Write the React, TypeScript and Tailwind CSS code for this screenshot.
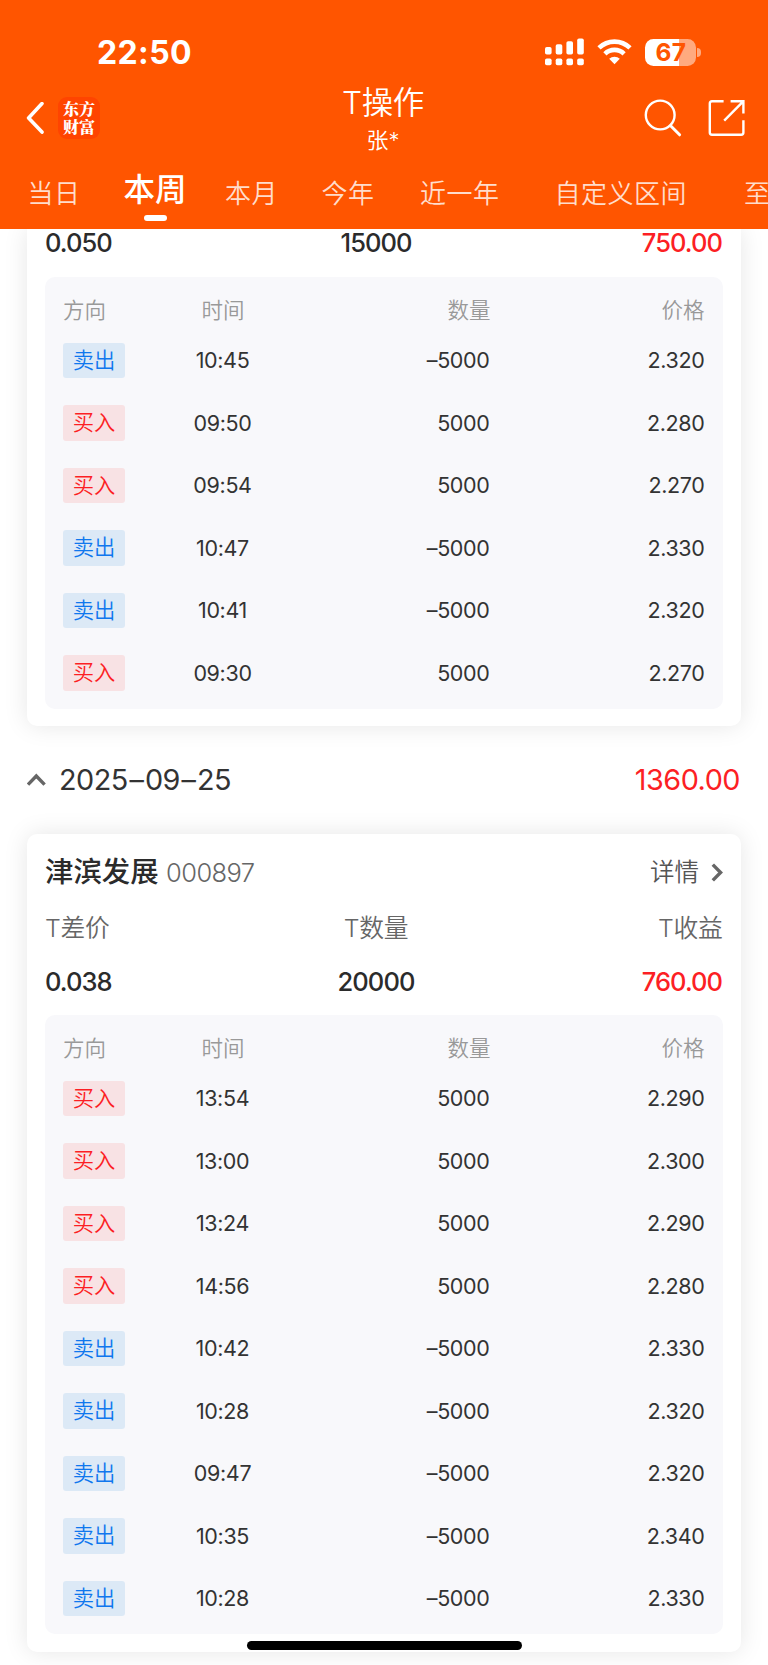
import React from "react";

type Side = "buy" | "sell";
type Trade = { side: Side; time: string; price: string };

const firstTrades: Trade[] = [
  { side: "sell", time: "10:45", price: "2.320" },
  { side: "buy", time: "09:50", price: "2.280" },
  { side: "buy", time: "09:54", price: "2.270" },
  { side: "sell", time: "10:47", price: "2.330" },
  { side: "sell", time: "10:41", price: "2.320" },
  { side: "buy", time: "09:30", price: "2.270" },
];

const secondTrades: Trade[] = [
  { side: "buy", time: "13:54", price: "2.290" },
  { side: "buy", time: "13:00", price: "2.300" },
  { side: "buy", time: "13:24", price: "2.290" },
  { side: "buy", time: "14:56", price: "2.280" },
  { side: "sell", time: "10:42", price: "2.330" },
  { side: "sell", time: "10:28", price: "2.320" },
  { side: "sell", time: "09:47", price: "2.320" },
  { side: "sell", time: "10:35", price: "2.340" },
  { side: "sell", time: "10:28", price: "2.330" },
];

const tabs = [
  { label: "当日", margin: "ml-[27.5px]" },
  { label: "本周", margin: "ml-[43px]", active: true },
  { label: "本月", margin: "ml-[38.5px]" },
  { label: "今年", margin: "ml-[43.5px]" },
  { label: "近一年", margin: "ml-[45.5px]" },
  { label: "自定义区间", margin: "ml-[55px]" },
  { label: "至今", margin: "ml-[57px]" },
];

function StatusBar() {
  return (
    <div className="flex h-[52px] items-center pl-[97px] pr-[67px]">
      <span className="mt-[2px] text-[32px] font-bold leading-[52px] tracking-[0.4px]">22:50</span>
      <svg className="ml-auto" width="39" height="28" viewBox="0 0 39 28" fill="currentColor">
        <rect x="0" y="9" width="6.6" height="7.6" rx="1.8" />
        <rect x="10.7" y="6.3" width="6.6" height="10.3" rx="1.8" />
        <rect x="21.4" y="3.3" width="6.6" height="13.3" rx="1.8" />
        <rect x="32.2" y="0.4" width="6.6" height="16.2" rx="1.8" />
        <rect x="0" y="20.4" width="6.6" height="6.8" rx="1.8" />
        <rect x="10.7" y="20.4" width="6.6" height="6.8" rx="1.8" />
        <rect x="21.4" y="20.4" width="6.6" height="6.8" rx="1.8" />
        <rect x="32.2" y="20.4" width="6.6" height="6.8" rx="1.8" />
      </svg>
      <svg className="ml-[13px]" width="35" height="26" viewBox="0 0 35 26" fill="none" stroke="currentColor">
        <path d="M2 8.9 A22.2 22.2 0 0 1 33 8.9" strokeWidth="4.6" />
        <path d="M7.9 14.8 A13.8 13.8 0 0 1 27.1 14.8" strokeWidth="4.6" />
        <path d="M17.5 25.2 L12.2 19.8 A7.6 7.6 0 0 1 22.8 19.8 Z" fill="currentColor" stroke="none" />
      </svg>
      <div className="ml-[13px] flex items-center">
        <div className="flex h-[27px] w-[51px] items-center justify-center rounded-[8.5px] bg-[linear-gradient(to_right,#fff_34px,#ffaa7f_34px)] pl-[2px] text-[24.5px] font-bold leading-[27px] tracking-[0.3px] text-[#ff5500]">
          67
        </div>
        <div className="ml-[1.5px] h-[9px] w-[4px] rounded-r-full bg-[#ffaa7f]" />
      </div>
    </div>
  );
}

function Header() {
  return (
    <header className="h-[228.7px] overflow-hidden bg-[#ff5500] pt-[26px] text-white">
      <StatusBar />
      <div className="flex h-[80px] items-start">
        <div className="flex w-[240px] items-center pl-[25px] pt-[19px]">
          <svg width="19" height="32" viewBox="0 0 19 32" fill="none" stroke="currentColor" strokeWidth="3.6" strokeLinecap="round" strokeLinejoin="round">
            <path d="M17 1.6 L3.6 15.9 L17 30.1" />
          </svg>
          <div className="ml-[14px] flex h-[42px] w-[42px] flex-col items-center justify-center rounded-[9px] bg-[#ff4400] font-['Noto_Serif_CJK_SC','Noto_Sans_CJK_SC',serif] text-[16px] font-black leading-[18px]">
            <span>东方</span>
            <span>财富</span>
          </div>
        </div>
        <div className="flex flex-1 flex-col items-center pr-[2px]">
          <h1 className="mt-[4px] text-[31.5px] font-[350] leading-[42px] tracking-[-0.3px]">T操作</h1>
          <p className="mt-[1px] text-[22px] font-[350] leading-[30px]">张*</p>
        </div>
        <div className="flex w-[240px] justify-end pr-[23px] pt-[21px]">
          <svg width="38" height="38" viewBox="0 0 38 38" fill="none" stroke="currentColor" strokeWidth="2.4" strokeLinecap="round">
            <circle cx="16.2" cy="16" r="14.4" />
            <path d="M26.6 26.8 L35.6 35.8" strokeWidth="3" />
          </svg>
          <svg className="ml-[25px]" width="38" height="38" viewBox="0 0 38 38" fill="none" stroke="currentColor" strokeWidth="2.4">
            <path d="M16.6 2.2 H5 Q2.8 2.2 2.8 4.4 V33.6 Q2.8 35.8 5 35.8 H34.2 Q36.4 35.8 36.4 33.6 V21.2" />
            <path d="M23.6 2.2 H36.4 V14.6 M36 2.6 L17.2 21.6" />
          </svg>
        </div>
      </div>
      <nav className="flex h-[70px] w-[850px] items-start">
        {tabs.map((tab) =>
          tab.active ? (
            <div key={tab.label} className={`${tab.margin} flex shrink-0 flex-col items-center`}>
              <span className="mt-[10px] text-[31.5px] font-medium leading-[44px]">{tab.label}</span>
              <span className="mt-[3px] h-[6px] w-[23px] rounded-full bg-white" />
            </div>
          ) : (
            <span key={tab.label} className={`${tab.margin} mt-[16px] shrink-0 text-[26px] font-[350] leading-[40px] tracking-[0.5px] text-[#ffddcc]`}>
              {tab.label}
            </span>
          )
        )}
      </nav>
    </header>
  );
}

function TradeRow({ trade }: { trade: Trade }) {
  const sell = trade.side === "sell";
  return (
    <div className="flex h-[62.5px] items-center">
      <span
        className={`flex h-[35.5px] w-[62px] items-center justify-center rounded-[3px] text-[21.3px] font-[350] leading-[35px] tracking-normal ${
          sell ? "bg-[#dce9f6] text-[#0f77ee]" : "bg-[#f8e2e4] text-[#fc1f24]"
        }`}
      >
        {sell ? "卖出" : "买入"}
      </span>
      <span className="ml-[47.5px] w-[100px] text-center">{trade.time}</span>
      <span className="w-[217px] text-right">{sell ? "–5000" : "5000"}</span>
      <span className="w-[215px] text-right">{trade.price}</span>
    </div>
  );
}

function TradeTable({ trades }: { trades: Trade[] }) {
  return (
    <div className="rounded-[10px] bg-[#f8f8fb] pb-[4.5px] pl-[18px] pt-[14.5px] text-[21.5px] font-[380] tracking-[-0.35px] text-[#333]">
      <div className="flex h-[38px] items-center font-[350] tracking-normal text-[#999]">
        <span className="w-[62px]">方向</span>
        <span className="ml-[48px] w-[100px] text-center">时间</span>
        <span className="w-[217.5px] text-right">数量</span>
        <span className="w-[214px] text-right">价格</span>
      </div>
      {trades.map((trade, i) => (
        <TradeRow key={i} trade={trade} />
      ))}
    </div>
  );
}

function StatValues({ diff, amount, profit }: { diff: string; amount: string; profit: string }) {
  return (
    <div className="flex h-[28px] items-center text-[25.5px] font-medium tracking-[-0.95px] text-[#2b2b2b]">
      <span className="w-[231px]">{diff}</span>
      <span className="w-[200px] text-center">{amount}</span>
      <span className="flex-1 pr-[1px] text-right text-[#fc1f24]">{profit}</span>
    </div>
  );
}

export default function App() {
  return (
    <div className="h-[1665px] w-[768px] overflow-hidden bg-white font-['Inter','Noto_Sans_CJK_SC',sans-serif]">
      <Header />
      <main className="relative h-[1436.3px] overflow-hidden px-[27px]">
        <section className="rounded-b-[10px] bg-white px-[18px] pb-[17.5px] shadow-[0_0_24px_rgba(0,0,0,0.1)]">
          <StatValues diff="0.050" amount="15000" profit="750.00" />
          <div className="h-[20px]" />
          <TradeTable trades={firstTrades} />
        </section>

        <div className="flex h-[107.5px] items-center text-[28.8px] font-[380] tracking-[-0.5px] text-[#333]">
          <svg width="19" height="13" viewBox="0 0 19 13" fill="none" stroke="#666" strokeWidth="3.4">
            <path d="M1 11.6 L9.3 3 L17.6 11.6" />
          </svg>
          <span className="ml-[13px]">
            2025<span className="px-[1.6px]">–</span>09<span className="px-[1.6px]">–</span>25
          </span>
          <span className="ml-auto pr-[1px] text-[#fc1f24]">1360.00</span>
        </div>

        <section className="rounded-[10px] bg-white px-[18px] pb-[18px] pt-[17px] shadow-[0_0_24px_rgba(0,0,0,0.1)]">
          <div className="flex h-[44px] items-center">
            <span className="text-[28.4px] font-medium text-[#2b2b2b]">津滨发展</span>
            <span className="ml-[7.5px] text-[25.5px] font-[330] tracking-[-0.6px] text-[#666]">000897</span>
            <span className="ml-auto text-[24.5px] font-[350] text-[#555]">详情</span>
            <svg className="ml-[12px]" width="12" height="19" viewBox="0 0 12 19" fill="none" stroke="#666" strokeWidth="3.4">
              <path d="M1.8 1.6 L9.6 9.5 L1.8 17.4" />
            </svg>
          </div>
          <div className="mt-[14px] flex h-[40px] items-center text-[24.8px] font-[350] tracking-[-0.3px] text-[#666]">
            <span className="w-[231px]">T差价</span>
            <span className="w-[200px] text-center">T数量</span>
            <span className="flex-1 pr-[0.5px] text-right">T收益</span>
          </div>
          <div className="h-[19px]" />
          <StatValues diff="0.038" amount="20000" profit="760.00" />
          <div className="h-[19px]" />
          <TradeTable trades={secondTrades} />
        </section>
        <div className="absolute bottom-[15px] left-[247px] h-[9px] w-[275px] rounded-full bg-black" />
      </main>
    </div>
  );
}
